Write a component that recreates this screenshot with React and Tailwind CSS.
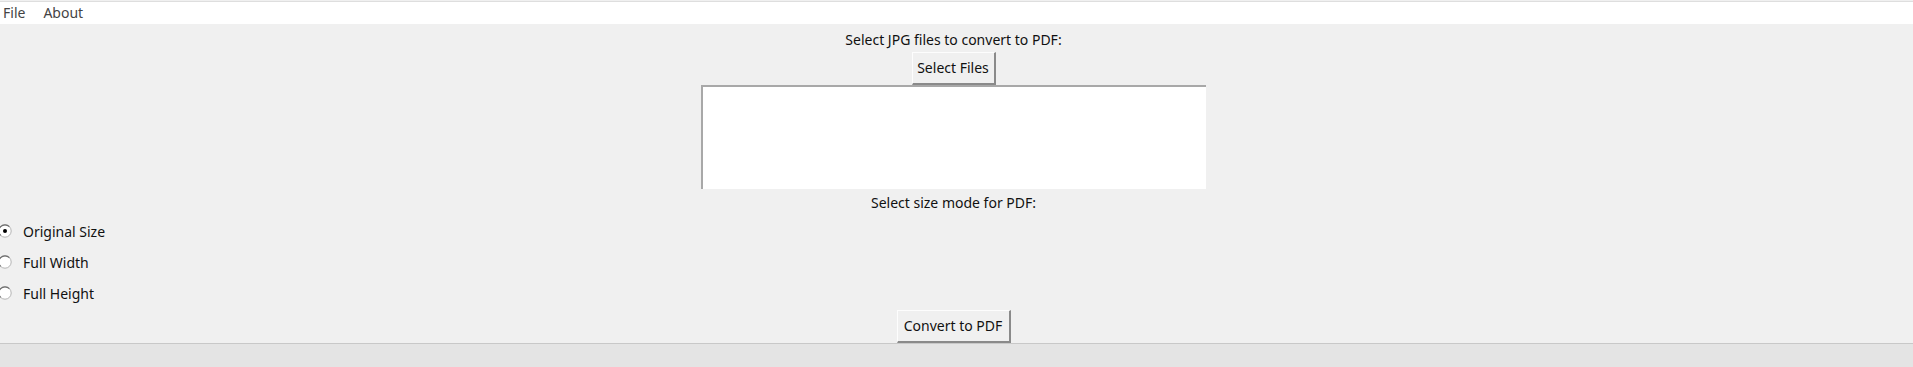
const Radio = ({ checked, label }) => {
  return (
    <div className="flex items-center h-[31px]">
      <svg width="14" height="14" viewBox="0 0 14 14" className="-ml-[2px]">
        <circle cx="7" cy="7" r="6.2" fill="#fff" stroke="#b4b4b4" />
        <path d="M2.6 11.4 A6.2 6.2 0 0 1 11.4 2.6" fill="none" stroke="#6e6e6e" strokeWidth="1.3" />
        {checked && <circle cx="7" cy="7" r="2" fill="#000" />}
      </svg>
      <span className="ml-[11px]">{label}</span>
    </div>
  )
}

const Button = ({ children, className }) => {
  return (
    <div
      className={
        'flex items-center justify-center bg-[#f0f0f0] border-t border-l border-t-[#fdfdfd] border-l-[#fdfdfd] border-r-2 border-b-2 border-r-[#8a8a8a] border-b-[#8a8a8a] ' +
        className
      }
    >
      {children}
    </div>
  )
}

const App = () => {
  return (
    <div
      className="w-[1913px] h-[367px] flex flex-col bg-[#f0f0f0] text-[14px] text-[#111] overflow-hidden"
      style={{ fontFamily: '"Noto Sans", "Open Sans", sans-serif' }}
    >
      <div className="h-[23px] bg-white border-t border-[#dedede] mt-[1px] flex items-center gap-[18px] pl-[3px] text-[#444]">
        <span>File</span>
        <span>About</span>
      </div>

      <div className="flex-1 flex flex-col items-center pr-[6px]">
        <div className="mt-[7px] h-[18px] leading-[18px]">Select JPG files to convert to PDF:</div>
        <Button className="mt-[3px] w-[84px] h-[33px]">Select Files</Button>
        <div className="w-[505px] h-[104px] bg-white border-t-2 border-l-2 border-[#a8a8a8]" />
        <div className="mt-[5px] h-[18px] leading-[18px]">Select size mode for PDF:</div>
        <div className="self-start mt-[4px] flex flex-col">
          <Radio checked label="Original Size" />
          <Radio label="Full Width" />
          <Radio label="Full Height" />
        </div>
        <Button className="mt-[1px] w-[114px] h-[33px]">Convert to PDF</Button>
      </div>

      <div className="h-[25px] bg-[#e4e4e4] border-t border-[#c8c8c8]" />
    </div>
  )
}

export default App
